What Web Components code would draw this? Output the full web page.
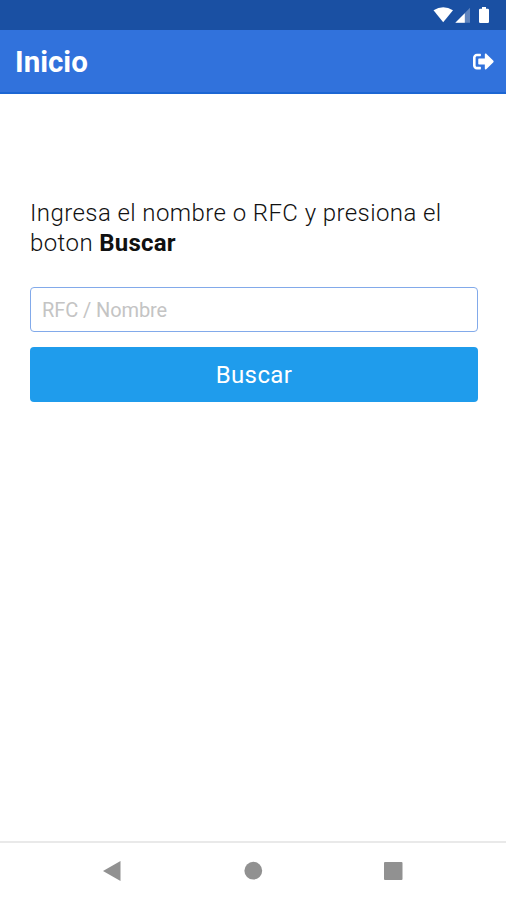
<!DOCTYPE html>
<html lang="es">
<head>
<meta charset="utf-8">
<title>Inicio</title>
<style>
    html, body { margin: 0; height: 100%; background: #fff; }
    body { font-family: Roboto, "Liberation Sans", sans-serif; overflow: hidden; }
</style>
</head>
<body>
<app-screen>
    <status-bar slot="top"></status-bar>
    <app-header slot="top">Inicio</app-header>
    <search-form placeholder="RFC / Nombre" action="Buscar">Ingresa el nombre o RFC y presiona el boton <b>Buscar</b></search-form>
    <nav-bar slot="bottom"></nav-bar>
</app-screen>

<script>
class AppScreen extends HTMLElement {
    constructor() {
        super();
        this.attachShadow({ mode: 'open' }).innerHTML = `
            <style>
                :host { display: flex; flex-direction: column; height: 100vh; }
                main { flex: 1; }
            </style>
            <slot name="top"></slot>
            <main><slot></slot></main>
            <slot name="bottom"></slot>
        `;
    }
}

class StatusBar extends HTMLElement {
    constructor() {
        super();
        this.attachShadow({ mode: 'open' }).innerHTML = `
            <style>
                :host { display: flex; justify-content: flex-end; height: 30px; background: #1a50a3; }
                svg { display: block; fill: #fff; }
            </style>
            <svg width="76" height="30" viewBox="0 0 76 30">
                <path d="M3.500 10.200Q13.200 4.200 23 10.200L13.200 22.200Z"/>
                <path d="M40 7.800V22.800H25.300Z" opacity=".3"/>
                <path d="M34.800 13.200V22.800H25.300Z"/>
                <path d="M52 7h4v1.800h1.800q1.200 0 1.200 1.200v11.800q0 1.200-1.200 1.200h-7.600q-1.200 0-1.200-1.200V10q0-1.200 1.200-1.200H52z"/>
            </svg>
        `;
    }
}

class AppHeader extends HTMLElement {
    constructor() {
        super();
        this.attachShadow({ mode: 'open' }).innerHTML = `
            <style>
                :host { display: flex; align-items: center; justify-content: space-between; box-sizing: border-box; height: 64px; padding: 1px 12px 0 15px; background: #3172dc; border-bottom: 2px solid #1c66d3; color: #fff; }
                h1 { margin: 0; font-size: 29.500px; line-height: 34px; font-weight: 700; letter-spacing: 0; }
                button { display: block; padding: 0; border: 0; background: none; color: inherit; }
                svg { display: block; fill: currentColor; }
            </style>
            <h1><slot></slot></h1>
            <button aria-label="Salir">
                <svg width="21" height="21" viewBox="0 0 512 512">
                    <path d="M497 273L329 441c-15 15-41 4.500-41-17v-96H152c-13.300 0-24-10.700-24-24v-96c0-13.300 10.700-24 24-24h136V88c0-21.400 25.900-32 41-17l168 168c9.300 9.400 9.300 24.600 0 34zM192 436v-40c0-6.600-5.400-12-12-12H96c-17.700 0-32-14.300-32-32V160c0-17.700 14.300-32 32-32h84c6.600 0 12-5.400 12-12V76c0-6.600-5.400-12-12-12H96c-53 0-96 43-96 96v192c0 53 43 96 96 96h84c6.600 0 12-5.400 12-12z"/>
                </svg>
            </button>
        `;
    }
}

class SearchForm extends HTMLElement {
    constructor() {
        super();
        this.attachShadow({ mode: 'open' });
    }

    connectedCallback() {
        this.shadowRoot.innerHTML = `
            <style>
                :host { display: block; padding: 104px 28px 0 30px; }
                p { margin: 0 0 29px; font-size: 24px; line-height: 30px; font-weight: 300; letter-spacing: .42px; color: #111; }
                ::slotted(b) { font-weight: 700; letter-spacing: .2px; }
                input, button { display: block; box-sizing: border-box; width: 100%; margin: 0; border-radius: 4px; font-family: inherit; }
                input { height: 45px; padding: 0 11px; border: 1px solid #82aaea; background: #fff; font-size: 20px; letter-spacing: -.1px; color: #333; outline: none; }
                input::placeholder { color: #c4c4c4; opacity: 1; }
                button { height: 55px; margin-top: 15px; padding: 1px 0 0; border: 0; background: #1f9cec; color: #fff; font-size: 24px; letter-spacing: .4px; }
            </style>
            <p><slot></slot></p>
            <input type="text" placeholder="${this.getAttribute('placeholder')}">
            <button>${this.getAttribute('action')}</button>
        `;
    }
}

class NavBar extends HTMLElement {
    constructor() {
        super();
        this.attachShadow({ mode: 'open' }).innerHTML = `
            <style>
                :host { display: flex; justify-content: center; box-sizing: border-box; height: 59px; border-top: 2px solid #e9e9e9; }
                svg { display: block; fill: #919191; }
            </style>
            <svg width="506" height="57" viewBox="0 843 506 57">
                <path d="M103 871L120.500 861V881Z"/>
                <circle cx="253.300" cy="870.700" r="8.900"/>
                <rect x="384" y="862" width="18.500" height="18" rx="1"/>
            </svg>
        `;
    }
}

customElements.define('app-screen', AppScreen);
customElements.define('status-bar', StatusBar);
customElements.define('app-header', AppHeader);
customElements.define('search-form', SearchForm);
customElements.define('nav-bar', NavBar);
</script>
</body>
</html>
